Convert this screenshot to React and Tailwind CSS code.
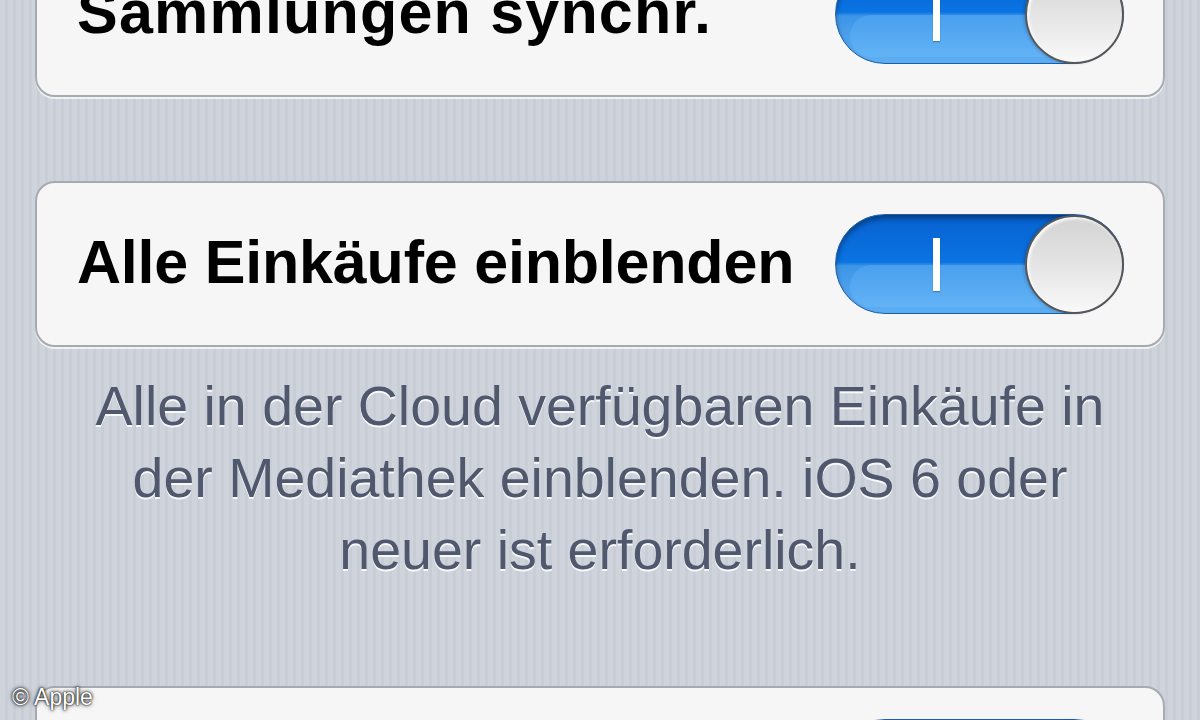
import React from "react";

function Toggle() {
  return (
    <div className="relative flex h-[100px] w-[289px] shrink-0 items-center rounded-full border border-[#1d5ea8] bg-[linear-gradient(180deg,#0862d0_0%,#0a73e2_48%,#3d95e8_52%,#5eaef2_100%)] shadow-[inset_0_4px_5px_rgba(0,0,0,0.35)]">
      <div className="absolute bottom-[6px] left-[14px] right-[40px] top-[50px] rounded-tl-[44px] rounded-bl-[44px] bg-[linear-gradient(180deg,#4aa0ee,#62b2f5)]" />
      <div className="relative ml-[97px] h-[53px] w-[7px] bg-white shadow-[0_1px_1px_rgba(0,0,0,0.25)]" />
      <div className="relative ml-auto mr-[-1px] h-[99px] w-[99px] rounded-full border-[2px] border-[#55575b] bg-[linear-gradient(180deg,#d3d3d3_0%,#e4e4e4_50%,#f9f9f9_100%)] shadow-[inset_2px_2px_3px_rgba(255,255,255,0.9),-2px_0_3px_rgba(0,0,0,0.15)]" />
    </div>
  );
}

function Card({ label, className = "", labelClass = "" }) {
  return (
    <div
      className={
        "ml-[35px] mr-[35px] flex h-[166px] items-center justify-between rounded-[20px] border-[2px] border-[#a6aab1] bg-[#f6f6f6] pl-[40px] pr-[39px] shadow-[0_2px_0_rgba(255,255,255,0.7)] " +
        className
      }
    >
      <span
        className={
          "mb-[4px] text-[61px] font-bold leading-none text-black [font-family:'Liberation_Sans',Arial,sans-serif] " +
          labelClass
        }
      >
        {label}
      </span>
      <Toggle />
    </div>
  );
}

export default function App() {
  return (
    <div className="relative h-[720px] w-[1200px] overflow-hidden bg-[repeating-linear-gradient(90deg,#cfd3db_0px,#cfd3db_5px,#c9cdd6_5px,#c9cdd6_8px)] [font-family:'Liberation_Sans',Arial,sans-serif]">
      <div className="flex flex-col">
        <Card label="Sammlungen synchr." className="mt-[-69px]" labelClass="tracking-[1.2px]" />
        <Card label="Alle Einkäufe einblenden" className="mt-[84px]" labelClass="tracking-[-0.2px]" />
        <p className="mx-[20px] mt-[23px] whitespace-nowrap text-center text-[55.5px] leading-[72px] text-[#4f586c] [text-shadow:0_2px_0_rgba(255,255,255,0.85)]">
          <span className="block">Alle in der Cloud verfügbaren Einkäufe in</span>
          <span className="block">der Mediathek einblenden. iOS 6 oder</span>
          <span className="block">neuer ist erforderlich.</span>
        </p>
        <Card label="" className="mt-[100px]" />
      </div>
      <div className="absolute bottom-[11px] left-[12px] text-[23px] leading-none text-white [text-shadow:0_0_3px_rgba(0,0,0,0.95),0_0_1px_rgba(0,0,0,1),0_0_5px_rgba(0,0,0,0.6)]">
        © Apple
      </div>
    </div>
  );
}
